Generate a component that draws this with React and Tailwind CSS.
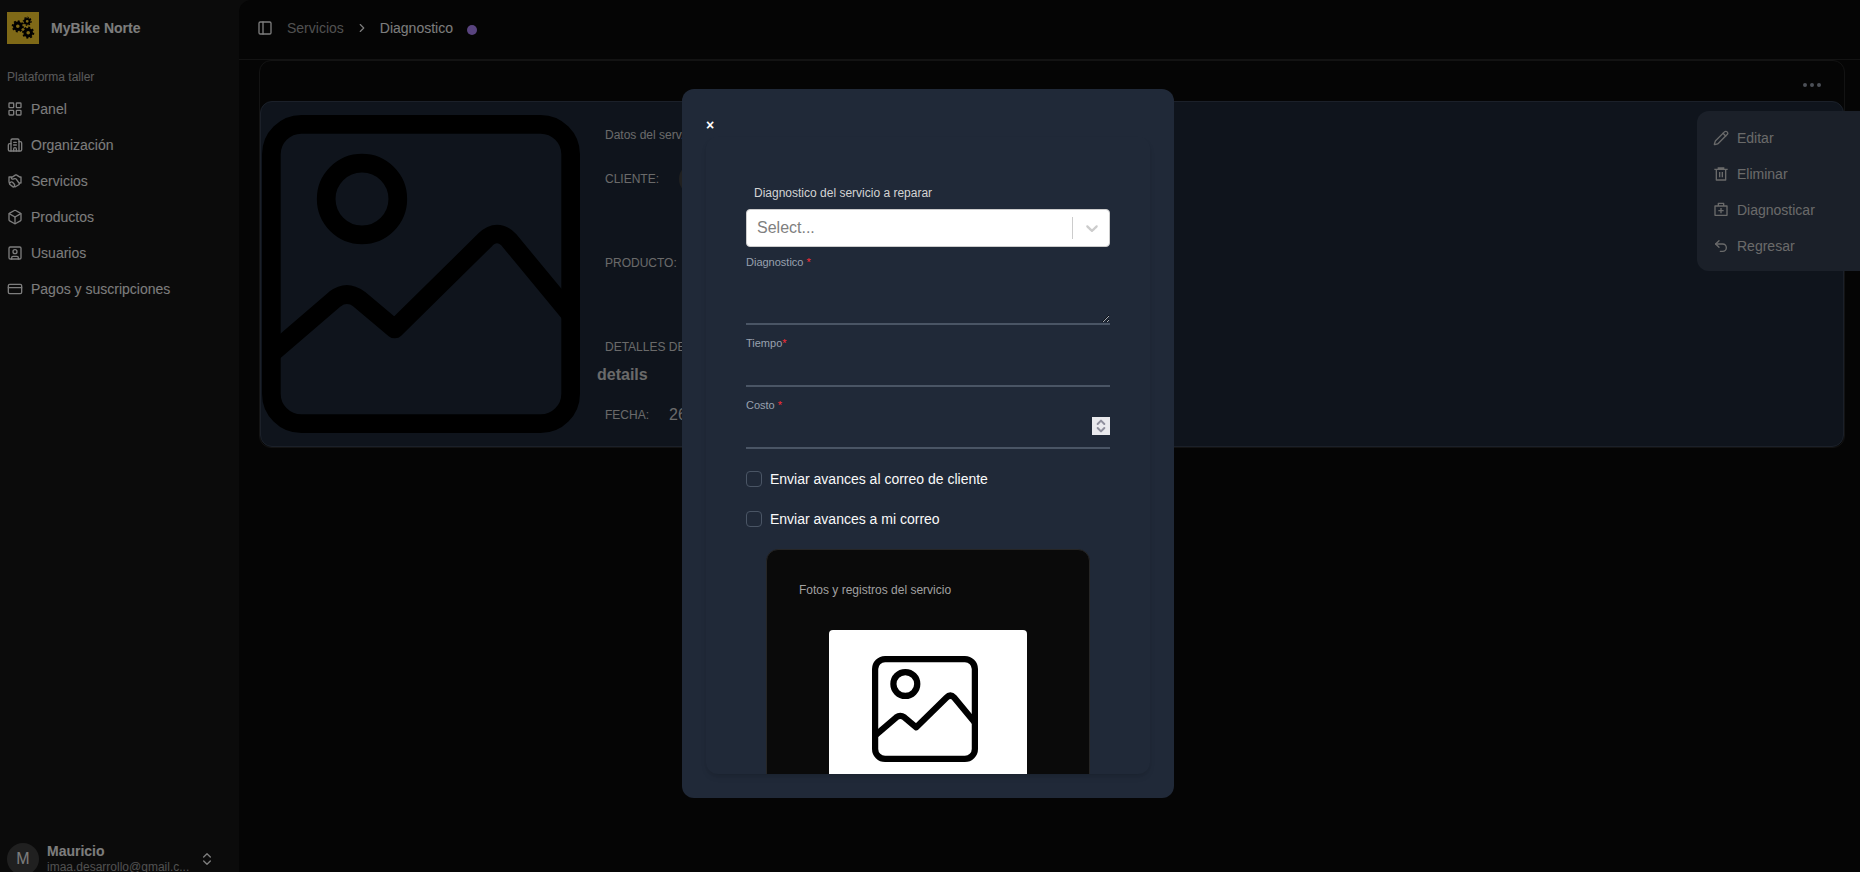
import { useState } from 'react';
import {
  Box,
  Building2,
  ChevronRight,
  ChevronsUpDown,
  CreditCard,
  Ellipsis,
  LayoutGrid,
  PanelLeft,
  Pencil,
  SquareUser,
  Undo2,
} from 'lucide-react';
import { RiDeleteBin6Line, RiFirstAidKitLine, RiShakeHandsLine } from 'react-icons/ri';

const navItems = [
  { title: 'Panel', icon: LayoutGrid },
  { title: 'Organización', icon: Building2 },
  { title: 'Servicios', icon: RiShakeHandsLine },
  { title: 'Productos', icon: Box },
  { title: 'Usuarios', icon: SquareUser },
  { title: 'Pagos y suscripciones', icon: CreditCard },
];

const menuItems = [
  { title: 'Editar', icon: Pencil },
  { title: 'Eliminar', icon: RiDeleteBin6Line },
  { title: 'Diagnosticar', icon: RiFirstAidKitLine },
  { title: 'Regresar', icon: Undo2 },
];

function ImagePlaceholder({ className }) {
  return (
    <svg className={className} viewBox="0 0 318 318" fill="none" stroke="#000" strokeWidth="18.7" strokeLinejoin="round">
      <rect x="9.35" y="9.35" width="299.3" height="299.3" rx="30" />
      <circle cx="100" cy="84" r="35.8" />
      <path d="M9 239L73 184Q84.7 175 97 184L132.7 214L223 125Q235 113 247 125L309 200" />
    </svg>
  );
}

// Each gear is a solid ring plus a dashed ring for the teeth
function GearsLogo() {
  return (
    <svg viewBox="0 0 32 32" className="size-8" fill="none" stroke="#000">
      <g strokeWidth="3">
        <circle cx="10.8" cy="14.3" r="3.3" />
        <circle cx="21.2" cy="20.7" r="3.3" />
      </g>
      <circle cx="20.2" cy="9.3" r="2.4" strokeWidth="2" />
      <g strokeWidth="1.8">
        <circle cx="10.8" cy="14.3" r="5.2" pathLength="16" strokeDasharray="1 1" />
        <circle cx="21.2" cy="20.7" r="5.2" pathLength="16" strokeDasharray="1 1" />
      </g>
      <circle cx="20.2" cy="9.3" r="3.8" strokeWidth="1.4" pathLength="16" strokeDasharray="1 1" />
    </svg>
  );
}

function Sidebar() {
  return (
    <aside className="flex w-[239px] shrink-0 flex-col bg-neutral-900 px-[7px] pt-3">
      <a href="#" className="flex items-center gap-3">
        <span className="bg-[#ffd22e]">
          <GearsLogo />
        </span>
        <span className="text-sm font-semibold">MyBike Norte</span>
      </a>
      <p className="mt-6 flex h-[18px] items-center text-xs text-neutral-50/70">Plataforma taller</p>
      <nav className="mt-[5px] flex flex-col">
        {navItems.map(({ title, icon: Icon }) => (
          <a key={title} href="#" className="flex h-9 items-center gap-2 text-sm">
            <Icon className="size-4 shrink-0" />
            {title}
          </a>
        ))}
      </nav>
      <button type="button" className="mt-auto flex h-8 items-center gap-2 text-left">
        <span className="flex size-8 shrink-0 items-center justify-center rounded-full bg-neutral-700">M</span>
        <span className="flex w-36 flex-col whitespace-nowrap">
          <span className="text-sm leading-4 font-semibold">Mauricio</span>
          <span className="text-xs leading-4 text-neutral-400">imaa.desarrollo@gmail.c...</span>
        </span>
        <ChevronsUpDown className="size-4" />
      </button>
    </aside>
  );
}

function Header() {
  return (
    <header className="flex h-[60px] shrink-0 items-center gap-[14px] border-b border-neutral-800 px-[18px] pb-1 text-sm">
      <button type="button" aria-label="Mostrar menú">
        <PanelLeft className="size-4" />
      </button>
      <nav className="flex items-center gap-[11px]">
        <a href="#" className="text-neutral-400">Servicios</a>
        <ChevronRight className="size-[14px]" />
        <span>Diagnostico</span>
      </nav>
      <span className="mt-1 size-[10px] rounded-full bg-[#b388ff]" />
    </header>
  );
}

function ServiceCard() {
  return (
    <section className="mr-[15px] ml-5 rounded-xl border border-neutral-800">
      <div className="flex h-10 items-center justify-end pt-2 pr-5">
        <div className="relative">
          <button type="button" aria-label="Opciones" className="block text-gray-400">
            <Ellipsis className="size-6" />
          </button>
          <div className="absolute top-[38px] left-[-103px] w-48 rounded-xl bg-gray-700 px-4 pt-[9px] pb-[7px]">
            {menuItems.map(({ title, icon: Icon }) => (
              <a key={title} href="#" className="flex h-9 items-center gap-2 text-sm text-neutral-300">
                <Icon className="size-4" />
                {title}
              </a>
            ))}
          </div>
        </div>
      </div>
      <div className="flex rounded-xl border border-gray-700 bg-gray-800 py-[13px]">
        <ImagePlaceholder className="ml-px size-[318px] shrink-0" />
        <div className="flex flex-col pl-[17px] text-xs text-neutral-300">
          <h2 className="mt-2 pl-2 leading-6">Datos del serv.</h2>
          <div className="mt-4 flex h-8 items-center gap-5 pl-2">
            CLIENTE:
            <span className="size-8 rounded-full bg-neutral-700" />
          </div>
          <p className="mt-14 pl-2 leading-6">PRODUCTO:</p>
          <p className="mt-[60px] pl-2 leading-6">DETALLES DEL</p>
          <p className="mt-1 text-base font-bold">details</p>
          <p className="mt-4 flex items-center gap-5 pl-2">
            FECHA: <span className="text-base">26/05</span>
          </p>
        </div>
      </div>
    </section>
  );
}

function Field({ id, label, children }) {
  return (
    <div className="flex flex-col">
      <label htmlFor={id} className="text-[11px] leading-4 text-gray-400">
        {label}
        <span className="text-red-500">*</span>
      </label>
      {children}
    </div>
  );
}

function Check({ label }) {
  return (
    <label className="flex h-10 items-center gap-2 text-sm text-neutral-50">
      <input type="checkbox" className="size-4 appearance-none rounded-sm border border-gray-600" />
      {label}
    </label>
  );
}

function DiagnosticModal({ onClose }) {
  return (
    <div className="fixed inset-0 flex items-start justify-center bg-black/50 pt-[89px] pr-1">
      <div role="dialog" aria-modal="true" className="flex h-[709px] w-[492px] flex-col rounded-xl bg-[#202938] p-6">
        <button type="button" onClick={onClose} aria-label="Cerrar" className="self-start text-sm leading-6 font-bold text-white">
          ×
        </button>
        <form className="min-h-0 flex-1 overflow-hidden rounded-xl px-10 pt-11 shadow-md">
          <label htmlFor="servicio" className="block pl-2 text-xs leading-6 font-medium text-neutral-300">
            Diagnostico del servicio a reparar
          </label>
          <div className="relative mt-1">
            <select id="servicio" className="block h-[38px] w-full appearance-none rounded-sm border border-[#cccccc] bg-white px-[10px] text-base text-[#808080]">
              <option>Select...</option>
            </select>
            <span className="pointer-events-none absolute inset-y-2 right-0 flex w-[38px] items-center justify-center border-l border-[#cccccc]">
              <svg viewBox="0 0 20 20" className="size-5 fill-[#cccccc]">
                <path d="M4.516 7.548c0.436-0.446 1.043-0.481 1.576 0l3.908 3.747 3.908-3.747c0.533-0.481 1.141-0.446 1.574 0 0.436 0.445 0.408 1.197 0 1.615-0.406 0.418-4.695 4.502-4.695 4.502-0.217 0.223-0.502 0.335-0.787 0.335s-0.57-0.112-0.789-0.335c0 0-4.287-4.084-4.695-4.502s-0.436-1.17 0-1.615z" />
              </svg>
            </span>
          </div>
          <div className="mt-[7px] flex flex-col gap-[10px]">
            <Field id="diagnostico" label="Diagnostico ">
              <textarea id="diagnostico" className="h-[55px] w-full border-b-2 border-gray-600 text-sm text-white outline-none" />
            </Field>
            <Field id="tiempo" label="Tiempo">
              <input id="tiempo" type="text" className="h-9 w-full border-b-2 border-gray-600 text-sm text-white outline-none" />
            </Field>
            <Field id="costo" label="Costo ">
              <div className="relative">
                <input
                  id="costo"
                  type="number"
                  className="block h-9 w-full appearance-none border-b-2 border-gray-600 text-sm text-white outline-none [-moz-appearance:textfield] [&::-webkit-inner-spin-button]:appearance-none"
                />
                <span className="pointer-events-none absolute top-1 right-0 flex size-[18px] items-center justify-center bg-[#e9e9ed] text-[#8f8f9d]">
                  <ChevronsUpDown className="size-4" strokeWidth={3} />
                </span>
              </div>
            </Field>
          </div>
          <div className="mt-[10px]">
            <Check label="Enviar avances al correo de cliente" />
            <Check label="Enviar avances a mi correo" />
          </div>
          <div className="mx-5 mt-[10px] flex flex-col rounded-xl border border-neutral-800 bg-neutral-950 px-8 pt-7">
            <h3 className="text-xs leading-6 font-medium text-neutral-400">Fotos y registros del servicio</h3>
            <div className="mt-7 h-[198px] w-[198px] self-center rounded-sm bg-white pt-[26px] pl-[43px]">
              <ImagePlaceholder className="size-[106px]" />
            </div>
          </div>
        </form>
      </div>
    </div>
  );
}

export default function App() {
  const [open, setOpen] = useState(true);

  return (
    <div className="h-screen overflow-hidden bg-neutral-900 font-['Liberation_Sans',sans-serif] text-neutral-50">
      <div className="flex h-[calc(100vh+3px)]">
        <Sidebar />
        <main className="flex min-w-0 flex-1 flex-col overflow-hidden rounded-tl-xl bg-neutral-950">
          <Header />
          <ServiceCard />
        </main>
      </div>
      {open && <DiagnosticModal onClose={() => setOpen(false)} />}
    </div>
  );
}
